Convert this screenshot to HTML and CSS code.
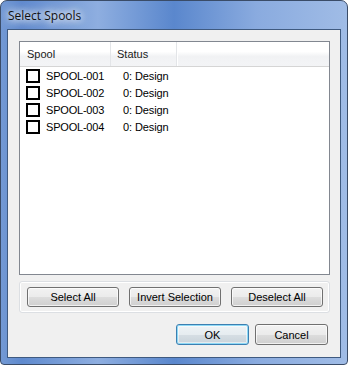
FILE: index.html
```html
<!DOCTYPE html>
<html lang="en">
<head>
    <meta charset="UTF-8">
    <title>Select Spools</title>
    <link rel="stylesheet" href="styles.css">
</head>
<body>
    <div class="window">
        <div class="titlebar">
            <span class="title">Select Spools</span>
        </div>
        <div class="client">
            <div class="listview">
                <div class="header">
                    <div class="col col-spool">Spool</div>
                    <div class="col col-status">Status</div>
                    <div class="col col-fill"></div>
                </div>
                <div class="rows">
                    <div class="row">
                        <div class="cell cell-spool"><span class="check"></span>SPOOL-001</div>
                        <div class="cell cell-status">0: Design</div>
                    </div>
                    <div class="row">
                        <div class="cell cell-spool"><span class="check"></span>SPOOL-002</div>
                        <div class="cell cell-status">0: Design</div>
                    </div>
                    <div class="row">
                        <div class="cell cell-spool"><span class="check"></span>SPOOL-003</div>
                        <div class="cell cell-status">0: Design</div>
                    </div>
                    <div class="row">
                        <div class="cell cell-spool"><span class="check"></span>SPOOL-004</div>
                        <div class="cell cell-status">0: Design</div>
                    </div>
                </div>
            </div>
            <div class="groupbox">
                <button class="btn btn-wide">Select All</button>
                <button class="btn btn-wide">Invert Selection</button>
                <button class="btn btn-wide">Deselect All</button>
            </div>
            <div class="actions">
                <button class="btn btn-default">OK</button>
                <button class="btn">Cancel</button>
            </div>
        </div>
    </div>
</body>
</html>
```

FILE: styles.css
```css
* {
    box-sizing: border-box;
}

body {
    margin: 0;
    background: #ffffff;
    font-family: 'Liberation Sans', Arial, sans-serif;
    font-size: 11px;
    color: #000;
}

/* Window frame */
.window {
    width: 348px;
    height: 365px;
    border: 1px solid #3a4c68;
    border-radius: 7px 7px 4px 4px;
    background: linear-gradient(to right, #7399d4 0%, #5f8ace 6%, #8eaee0 28%, #5a87cd 50%, #8aabdf 74%, #a0bce6 100%);
    padding: 0 6px 6px 6px;
    display: flex;
    flex-direction: column;
}

.titlebar {
    height: 28px;
    display: flex;
    align-items: center;
    padding-left: 1px;
    padding-top: 1px;
}

.title {
    font-family: 'Open Sans', 'Noto Sans', sans-serif;
    font-size: 12px;
    color: #111;
    text-shadow: 0 0 6px #ffffff, 0 0 10px #ffffff, 0 0 14px rgba(255, 255, 255, 0.9);
}

.client {
    flex: 1;
    background: #f0f0f0;
    border: 1px solid #3f5a80;
    padding: 11px 10px 0 11px;
    display: flex;
    flex-direction: column;
}

/* List view */
.listview {
    height: 234px;
    border: 1px solid #828790;
    background: #ffffff;
}

.header {
    display: flex;
    height: 25px;
    border-bottom: 1px solid #d5d5d5;
    background: linear-gradient(to bottom, #ffffff 0%, #ffffff 40%, #f1f2f4 60%, #f3f4f6 100%);
}

.col {
    display: flex;
    align-items: center;
    padding-left: 7px;
    border-right: 1px solid #e3e5e8;
    color: #1a1a1a;
}

.col-spool {
    width: 91px;
}

.col-status {
    width: 66px;
    padding-left: 6px;
}

.col-fill {
    flex: 1;
    border-right: none;
    border-left: 1px solid #ffffff;
}

.row {
    display: flex;
    height: 17px;
    align-items: center;
}

.cell-spool {
    width: 91px;
    display: flex;
    align-items: center;
    padding-left: 6px;
    letter-spacing: -0.2px;
}

.check {
    width: 14px;
    height: 14px;
    border: 2px solid #000;
    background: #fff;
    margin-right: 6px;
}

.cell-status {
    padding-left: 12px;
    letter-spacing: -0.1px;
}

/* Group of selection buttons */
.groupbox {
    margin-top: 6px;
    height: 32px;
    border: 1px solid #dcdfe3;
    border-radius: 3px;
    box-shadow: inset 0 0 0 1px #ffffff;
    display: flex;
    align-items: center;
    padding: 0 6px 0 7px;
    gap: 10px;
}

.btn {
    font-family: 'Liberation Sans', Arial, sans-serif;
    font-size: 11px;
    color: #000;
    height: 20px;
    padding: 0;
    border: 1px solid #707070;
    border-radius: 3px;
    background: linear-gradient(to bottom, #f2f2f2 0%, #ebebeb 50%, #dddddd 51%, #cfcfcf 100%);
    box-shadow: inset 0 0 0 1px rgba(255, 255, 255, 0.7);
}

.btn-wide {
    width: 92px;
}

.actions {
    margin-top: 11px;
    display: flex;
    justify-content: flex-end;
    gap: 6px;
    padding-right: 2px;
}

.actions .btn {
    width: 73px;
    height: 21px;
}

.btn-default {
    border-color: #3c7fb1;
    box-shadow: inset 0 0 0 1px #8ed9f6, inset 0 0 0 2px rgba(255, 255, 255, 0.5);
    background: linear-gradient(to bottom, #eef3f6 0%, #e6ecf0 50%, #d6dee4 51%, #c9d3da 100%);
}
```
